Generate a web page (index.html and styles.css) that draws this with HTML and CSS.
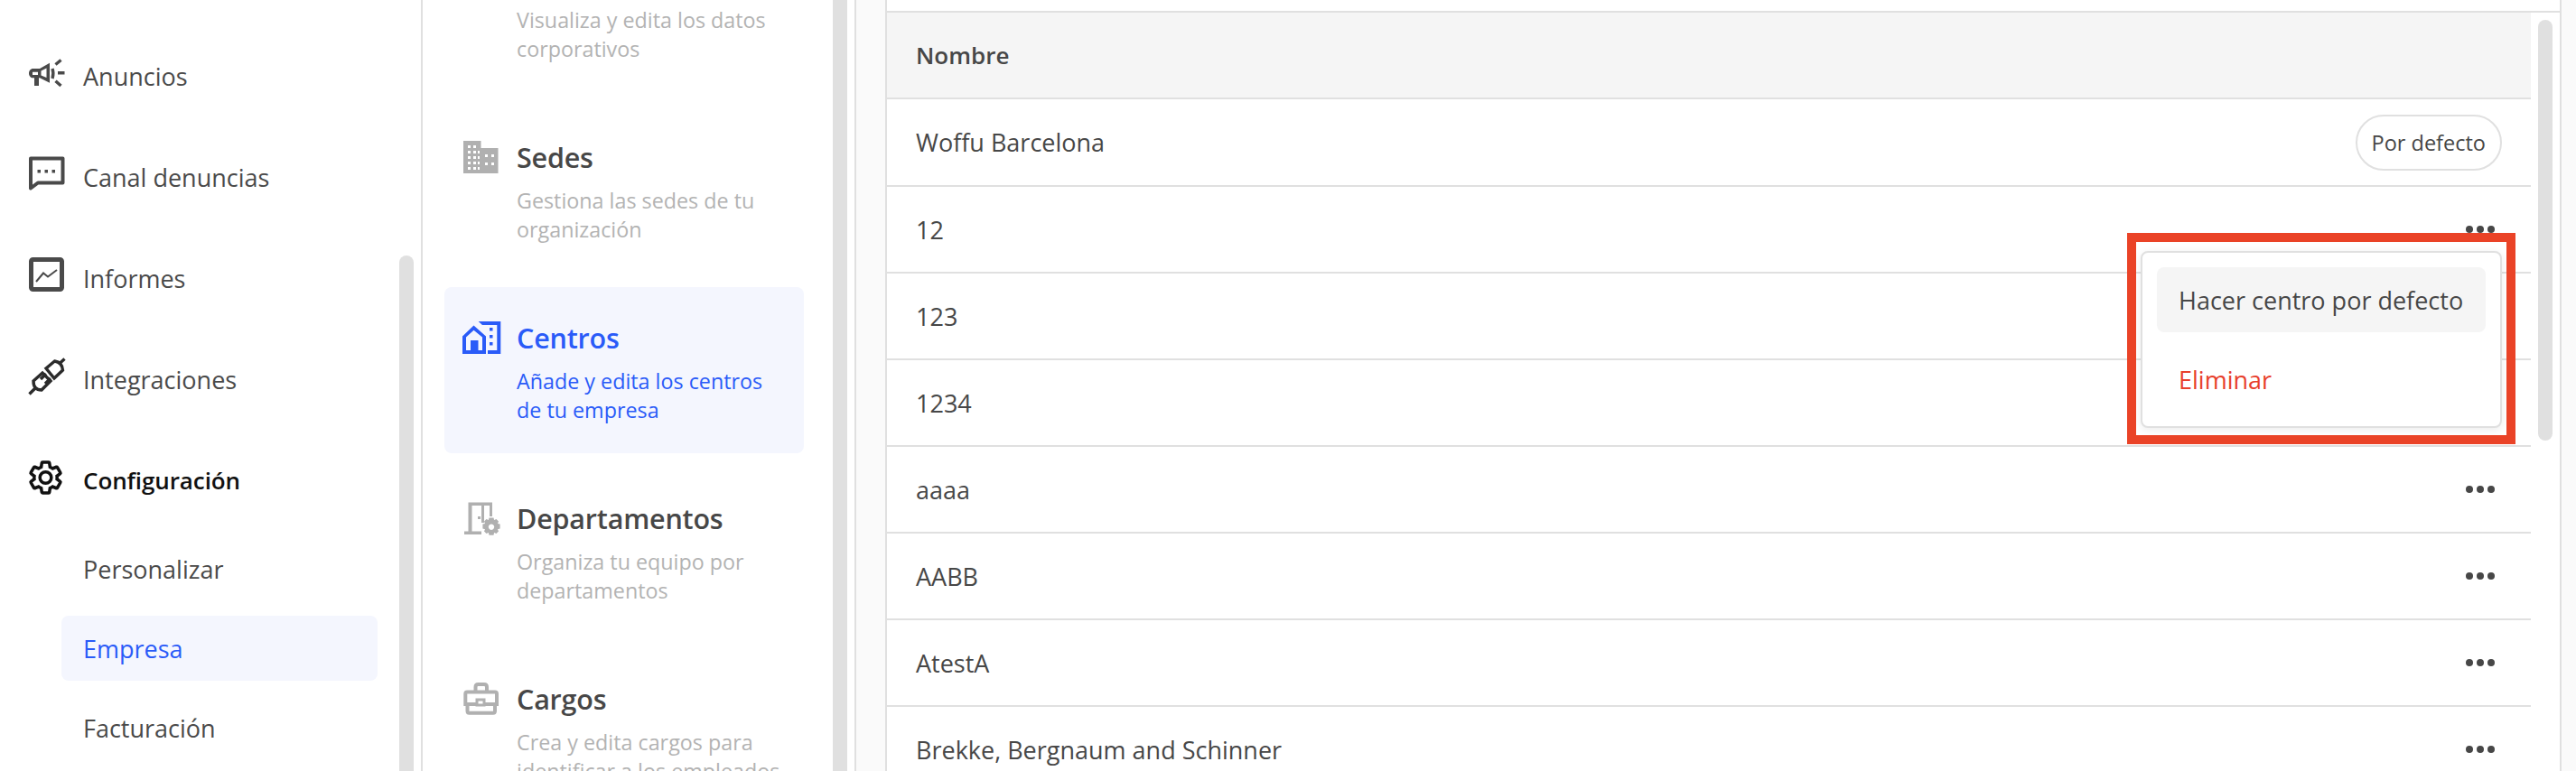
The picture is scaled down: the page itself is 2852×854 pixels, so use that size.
FILE: index.html
```html
<!DOCTYPE html>
<html lang="es">
<head>
<meta charset="utf-8">
<title>Centros</title>
<link rel="stylesheet" href="styles.css">
</head>
<body>
<div class="app">
  <nav class="sidebar">
    <a class="nav-row"><svg class="nav-icon" viewBox="0 0 40 40"><path class="fill" d="M23 8.700v22l-11-5.400H11V34H6V25.300H4.500C2 25.300 0 23 0 20.200S2 15 4.500 15H12z"/><path class="fillw" d="M19.500 14.500V25L13.500 22.500V17.500ZM4 18.700H10V22H4Z"/><path class="line" d="M26 15q1.800 5 0 11M29.500 10.500 35.500 5.500M32 19.700H39.500M29.500 28.700 35.500 34"/></svg><span>Anuncios</span></a>
    <a class="nav-row"><svg class="nav-icon" viewBox="0 0 40 40"><path class="line4" d="M2 2.500H37.500V29.500H10L2 35.500Z"/><path class="fill" d="M9.500 15h3.500v3.500H9.500zM17.500 15H21v3.500H17.500zM25.500 15H29v3.500H25.500z"/></svg><span>Canal denuncias</span></a>
    <a class="nav-row"><svg class="nav-icon" viewBox="0 0 40 40"><rect class="line5" x="2.500" y="2.500" width="34" height="33" rx="2"/><path class="thin" d="M8 27 16 17.500 21 21.500 31 14"/></svg><span>Informes</span></a>
    <a class="nav-row"><svg class="nav-icon dark" viewBox="0 0 40 40"><path class="line" d="M19 11 28.500 3Q37 4.500 37.500 13L28 22ZM33.500 6 39.500 .5M5 25 15 16 24 25 14 35Q5 35 5 25ZM7 33 .5 39.500M13 23 19 17M18 28 24 22"/></svg><span>Integraciones</span></a>
    <a class="nav-row active-parent"><svg class="nav-icon" viewBox="0 0 40 40"><path class="gear" transform="translate(18.500 20) scale(1.760) translate(-12 -12)" d="M19.140 12.940c.04-.3.06-.61.06-.94 0-.32-.02-.64-.07-.94l2.030-1.580c.18-.14.23-.41.12-.61l-1.920-3.320c-.12-.22-.37-.29-.59-.22l-2.390.96c-.5-.38-1.030-.7-1.620-.94l-.36-2.540c-.04-.24-.24-.41-.48-.41h-3.840c-.24 0-.43.17-.47.41l-.36 2.540c-.59.24-1.130.57-1.620.94l-2.390-.96c-.22-.08-.47 0-.59.22L2.740 8.870c-.12.21-.08.47.12.61l2.030 1.580c-.05.3-.09.63-.09.94s.02.64.07.94l-2.030 1.580c-.18.14-.23.41-.12.61l1.920 3.320c.12.22.37.29.59.22l2.390-.96c.5.38 1.030.7 1.620.94l.36 2.540c.05.24.24.41.48.41h3.840c.24 0 .44-.17.47-.41l.36-2.540c.59-.24 1.130-.56 1.620-.94l2.390.96c.22.08.47 0 .59-.22l1.920-3.320c.12-.22.07-.47-.12-.61l-2.010-1.580zM12 15.600c-1.980 0-3.600-1.620-3.600-3.600s1.620-3.600 3.600-3.600 3.600 1.620 3.600 3.600-1.620 3.600-3.600 3.600z"/></svg><span>Configuración</span></a>
    <div class="subnav">
      <a class="sub-row">Personalizar</a>
      <a class="sub-row current">Empresa</a>
      <a class="sub-row">Facturación</a>
    </div>
    <div class="thumb thumb-nav"></div>
  </nav>

  <aside class="settings">
    <div class="settings-list">
      <a class="set-card partial">
        <span class="set-spacer"></span>
        <span class="set-text"><span class="set-desc">Visualiza y edita los datos corporativos</span></span>
      </a>
      <a class="set-card">
        <svg class="set-icon gray" viewBox="0 0 40 40"><path d="M1 2H20.500V10H39.500V38H1Z"/><path class="win" d="M6 7h3v3H6zM12 7h3v3h-3zM6 13h3v3H6zM12 13h3v3h-3zM17 13h2v3h-2zM6 19h3v3H6zM12 19h3v3h-3zM17 19h2v3h-2zM6 25h3v3H6zM12 25h3v3h-3zM17 25h2v3h-2zM6 31h3v3H6zM12 31h3v3h-3zM17 31h2v3h-2zM25 17h3v3h-3zM32 17h3v3h-3zM25 26h3v3h-3zM32 26h3v3h-3z"/></svg>
        <span class="set-text"><span class="set-title">Sedes</span><span class="set-desc">Gestiona las sedes de tu organización</span></span>
      </a>
      <a class="set-card selected">
        <svg class="set-icon blue" viewBox="0 0 40 40"><path d="M17.700 2H42.300V38H28V34H38.300V6H22ZM30 9h3.500v3.500H30zM30 17h3.500v3.500H30zM30 25h3.500v3.500H30z"/><path d="M12.500 6.500 26 18.500V38H0V18.500ZM12.500 11.700 4 19.400V34H9V23H17.500V34H22V19.400Z" fill-rule="evenodd"/></svg>
        <span class="set-text"><span class="set-title">Centros</span><span class="set-desc">Añade y edita los centros de tu empresa</span></span>
      </a>
      <a class="set-card">
        <svg class="set-icon gray" viewBox="0 0 40 40"><path d="M6.500 2.500H33V18H30V6H24V25H21V6H10.500V34.500H21V38H2V34.500H6.500ZM17 18h3v3h-3z"/><path fill-rule="evenodd" d="M29.500 19.500h5l.6 2.600 2.400-1 2.500 2.500-1 2.400 2.600.6v5l-2.600.6 1 2.400-2.500 2.500-2.400-1-.6 2.600h-5l-.6-2.600-2.400 1-2.500-2.500 1-2.400-2.600-.6v-5l2.600-.6-1-2.400 2.500-2.500 2.400 1ZM32 26.500a3.200 3.200 0 1 0 .01 0Z"/></svg>
        <span class="set-text"><span class="set-title">Departamentos</span><span class="set-desc">Organiza tu equipo por departamentos</span></span>
      </a>
      <a class="set-card">
        <svg class="set-icon grayline" viewBox="0 0 40 40"><path d="M14.500 12V7Q14.500 4 17.500 4H24Q27 4 27 7V12M3.300 26V14.500Q3.300 12.500 5.300 12.500H36Q38 12.500 38 14.500V26ZM5.500 26V33.500Q5.500 35.700 7.500 35.700H34Q36 35.700 36 33.500V26"/><rect class="latch" x="16" y="21" width="8" height="6"/></svg>
        <span class="set-text"><span class="set-title">Cargos</span><span class="set-desc">Crea y edita cargos para identificar a los empleados</span></span>
      </a>
    </div>
    <div class="thumb thumb-settings"></div>
  </aside>

  <main class="panel">
    <section class="panel-card">
      <div class="table">
        <div class="row head">Nombre</div>
        <div class="row first"><span>Woffu Barcelona</span><span class="pill">Por defecto</span></div>
        <div class="row open"><span>12</span><span class="dots"><i></i><i></i><i></i></span>
          <div class="menu">
            <a class="menu-item hover">Hacer centro por defecto</a>
            <a class="menu-item danger">Eliminar</a>
          </div>
          <div class="callout"></div>
        </div>
        <div class="row"><span>123</span><span class="dots"><i></i><i></i><i></i></span></div>
        <div class="row"><span>1234</span><span class="dots"><i></i><i></i><i></i></span></div>
        <div class="row"><span>aaaa</span><span class="dots"><i></i><i></i><i></i></span></div>
        <div class="row"><span>AABB</span><span class="dots"><i></i><i></i><i></i></span></div>
        <div class="row"><span>AtestA</span><span class="dots"><i></i><i></i><i></i></span></div>
        <div class="row"><span>Brekke, Bergnaum and Schinner</span><span class="dots"><i></i><i></i><i></i></span></div>
      </div>
      <div class="thumb thumb-panel"></div>
    </section>
  </main>
</div>
</body>
</html>
```

FILE: styles.css
```css
* { box-sizing: border-box; }
html, body { margin: 0; height: 100%; background: #fff; }
body { font-family: "Open Sans", "Noto Sans", sans-serif; color: #474747; overflow: hidden; }
.app { display: flex; height: 854px; overflow: hidden; }
.thumb { position: absolute; width: 16px; background: #e0e0e0; border-radius: 8px; }

/* primary nav */
.sidebar { position: relative; width: 468px; flex: none; padding-top: 28px; border-right: 2px solid #e0e0e0; overflow: hidden; }
.nav-row { display: flex; align-items: center; gap: 20px; height: 112px; padding-left: 32px; font-size: 27px; color: #4a4a4a; }
.nav-icon { width: 40px; height: 40px; flex: none; margin-bottom: 6px; overflow: visible; }
.nav-icon .fill { fill: #4a4a4a; }
.nav-icon .fillw { fill: #fff; }
.nav-icon .line { fill: none; stroke: #4a4a4a; stroke-width: 3.400; }
.nav-icon.dark .line { stroke: #2b2b2b; }
.nav-icon .line4 { fill: none; stroke: #4a4a4a; stroke-width: 4; stroke-linejoin: round; }
.nav-icon .line5 { fill: none; stroke: #4a4a4a; stroke-width: 5; }
.nav-icon .thin { fill: none; stroke: #4a4a4a; stroke-width: 2; }
.nav-icon .gear { fill: none; stroke: #111; stroke-width: 2; }
.active-parent { color: #111; font-weight: 600; font-size: 26px; letter-spacing: -.1px; }
.subnav { display: flex; flex-direction: column; gap: 16px; width: 350px; margin: 6px 0 0 68px; }
.sub-row { display: flex; align-items: center; height: 72px; padding-left: 24px; border-radius: 8px; font-size: 27px; color: #4a4a4a; }
.sub-row.current { background: #f4f6fe; color: #2a5bf8; font-weight: 500; }
.thumb-nav { left: 442px; top: 283px; bottom: -40px; }

/* secondary list */
.settings { position: relative; width: 480px; flex: none; padding-left: 24px; border-right: 2px solid #e0e0e0; overflow: hidden; }
.settings-list { display: flex; flex-direction: column; gap: 16px; width: 398px; }
.set-card { display: flex; gap: 20px; height: 184px; padding: 32px 20px; border-radius: 8px; }
.set-card.partial { height: 102px; padding-top: 6px; padding-bottom: 0; }
.set-spacer { width: 40px; flex: none; }
.set-icon { width: 40px; height: 40px; flex: none; margin-top: 4px; overflow: visible; }
.set-icon.gray { fill: #b0b0b0; }
.set-icon .win { fill: #fff; }
.set-icon.blue { fill: #2a5bf8; }
.set-icon.grayline { fill: none; stroke: #b0b0b0; stroke-width: 4; }
.set-icon .latch { fill: #fff; stroke-width: 3; }
.set-text { display: flex; flex-direction: column; min-width: 0; }
.set-title { font-size: 30.500px; line-height: 48px; font-weight: 600; letter-spacing: -.2px; color: #474747; margin-bottom: 8px; }
.set-desc { font-size: 23.300px; line-height: 32px; color: #b3b3b3; }
.selected { background: #f4f6fe; }
.selected .set-title, .selected .set-desc { color: #2a5bf8; }
.thumb-settings { right: 8px; top: -20px; bottom: -20px; }

/* centres table */
.panel { flex: 1; min-width: 0; padding: 0 16px 0 32px; background: #fafafa; overflow: hidden; }
.panel-card { position: relative; height: 100%; padding-top: 12px; background: #fff; border-left: 2px solid #e0e0e0; border-right: 2px solid #e0e0e0; overflow: hidden; }
.table { border-top: 2px solid #e0e0e0; }
.row { position: relative; display: flex; align-items: center; justify-content: space-between; width: 1820px; height: 96px; padding: 0 32px; border-bottom: 2px solid #e0e0e0; font-size: 27px; }
.row.head { background: #f5f5f5; font-weight: 600; font-size: 26px; }
.row.first { height: 97px; }
.row.open { z-index: 2; }
.pill { display: flex; align-items: center; height: 62px; padding: 0 16px; border: 2px solid #e0e0e0; border-radius: 31px; font-size: 23.500px; }
.dots { display: flex; gap: 4px; margin-right: 8px; }
.dots i { display: block; width: 8px; height: 8px; border-radius: 50%; background: #474747; }
.menu { position: absolute; top: 71px; right: 32px; display: flex; flex-direction: column; gap: 16px; width: 400px; height: 196px; padding: 16px; background: #fff; border: 2px solid #e0e0e0; border-radius: 8px; box-shadow: 0 2px 10px rgba(0, 0, 0, .08); }
.menu-item { display: flex; align-items: center; height: 72px; padding-left: 24px; border-radius: 8px; }
.menu-item.hover { background: #f5f5f5; }
.menu-item.danger { color: #e8402c; }
.callout { position: absolute; top: 51px; right: 17px; width: 430px; height: 234px; border: 10px solid #ea4327; }
.thumb-panel { top: 22px; left: 1828px; height: 466px; }
```
